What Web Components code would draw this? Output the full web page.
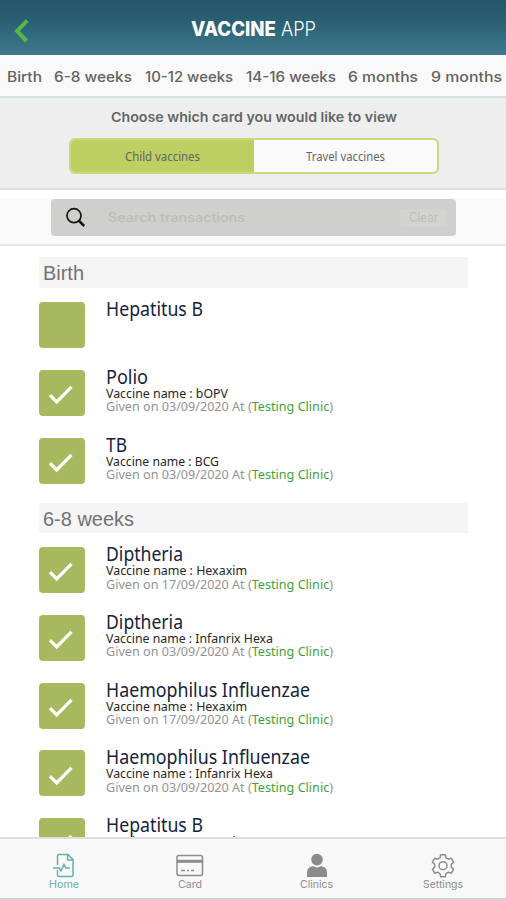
<!DOCTYPE html>
<html lang="en">
<head>
<meta charset="utf-8">
<title>Vaccine App</title>
<style>
html,body{margin:0;height:100%}
body{background:#fff;font-family:"Noto Sans","Open Sans",sans-serif;overflow:hidden}
</style>
</head>
<body>
<vaccine-app></vaccine-app>
<script>
const define = (name, html, setup) => {
  const t = document.createElement('template');
  t.innerHTML = html;
  customElements.define(name, class extends HTMLElement {
    connectedCallback() {
      if (this.shadowRoot) return;
      this.attachShadow({mode: 'open'}).append(t.content.cloneNode(true));
      if (setup) setup(this, this.shadowRoot);
    }
  });
};

/* One line of text condensed or expanded to the width given by its "w" attribute. */
define('fit-text', `<style>
:host{display:block;flex:none;white-space:nowrap}
span{display:inline-block;transform-origin:0 50%}
</style><span><slot></slot></span>`, (el, root) => {
  const w = +el.getAttribute('w'), s = root.querySelector('span');
  el.style.width = w + 'px';
  s.style.transform = 'scaleX(' + w / s.getBoundingClientRect().width + ')';
});

define('app-header', `<style>
:host{display:grid;grid-template-columns:1fr auto 1fr;align-items:center;height:55px;background:linear-gradient(#22566a,#2b6074 40%,#3f798d);color:#fff;box-sizing:border-box;padding:3px 14px 0;font:20px/24px Inter,sans-serif}
svg{display:block;margin-top:4px}
.t{display:flex;gap:5px;padding-left:1px}
.b{font-weight:800}.l{font-weight:300}
</style>
<svg width="16" height="26" viewBox="0 0 16 26"><path d="M13.2 2.6 3 13 12.5 23" fill="none" stroke="#58b548" stroke-width="4"/></svg>
<div class="t"><fit-text class="b" w="85">VACCINE</fit-text><fit-text class="l" w="35">APP</fit-text></div>`);

define('age-tabs', `<style>
:host{display:flex;justify-content:space-between;align-items:center;height:43px;box-sizing:border-box;padding:2px 4px 0 6.5px;background:#f9f9f9;border-bottom:2px solid #d2e0e7;color:#626262;font:500 14px/20px Inter,sans-serif}
</style>
<fit-text w="35">Birth</fit-text><fit-text w="78">6-8 weeks</fit-text><fit-text w="88">10-12 weeks</fit-text><fit-text w="90">14-16 weeks</fit-text><fit-text w="70">6 months</fit-text><fit-text w="71">9 months</fit-text>`);

define('card-chooser', `<style>
:host{display:flex;flex-direction:column;align-items:center;height:92px;box-sizing:border-box;padding-top:9px;background:#eee;border-bottom:2px solid #dedede;color:#626664}
.q{font:600 13.5px/20px Inter,sans-serif;margin-left:1px}
.s{display:grid;grid-template-columns:1fr 1fr;width:370px;height:36px;margin:11px 0 0 2px;box-sizing:border-box;border:2px solid #c9d97b;border-radius:6px;overflow:hidden;background:#fafafa}
.s div{display:flex;align-items:center;justify-content:center;font-size:12px;line-height:16px;padding-top:1px}
.on{background:#bed062}
</style>
<fit-text class="q" w="286">Choose which card you would like to view</fit-text>
<div class="s"><div class="on"><fit-text w="75">Child vaccines</fit-text></div><div><fit-text w="79">Travel vaccines</fit-text></div></div>`);

define('search-bar', `<style>
:host{display:block;height:48px;margin-top:8px;box-sizing:border-box;padding:1px 50px 0 51px;background:#f9f9f9;border-bottom:2px solid #e7e7e7;font:12.5px/18px Inter,sans-serif}
.b{display:flex;align-items:center;height:37px;box-sizing:border-box;padding:0 9px 0 13.5px;border-radius:4px;background:#cfd0cd}
.p{margin-left:22px;color:#bcbdba;font-weight:500}
.c{margin-left:auto;padding:0 9px;background:#d3d4d1;color:#bdbebb;border-radius:2px}
</style>
<div class="b"><svg width="21" height="21" viewBox="0 0 21 21"><circle cx="9" cy="8.7" r="7" fill="none" stroke="#151515" stroke-width="1.7"/><path d="m13.7 13.5 5.5 5.5" stroke="#151515" stroke-width="2.5"/></svg>
<fit-text class="p" w="137">Search transactions</fit-text><div class="c"><fit-text w="29">Clear</fit-text></div></div>`);

define('age-section', `<style>
:host{display:block}
h2{display:flex;align-items:center;height:30.5px;box-sizing:border-box;margin:0 0 var(--gap,14.5px);padding:2px 0 0 4.5px;background:#f5f5f5;color:#727272;font:400 20px/24px "Liberation Sans",sans-serif}
.i{display:flex;flex-direction:column;gap:21.8px}
</style><h2><fit-text></fit-text></h2><div class="i"><slot></slot></div>`, (el, root) => {
  const f = root.querySelector('fit-text');
  f.textContent = el.getAttribute('name');
  const w = +el.getAttribute('w'), s = f.shadowRoot.querySelector('span');
  f.style.width = w + 'px';
  s.style.transform = 'none';
  s.style.transform = 'scaleX(' + w / s.getBoundingClientRect().width + ')';
});

define('vaccine-item', `<style>
:host{display:flex;gap:22px;height:46px}
.k{flex:none;display:grid;place-items:center;width:46px;height:46px;border-radius:4px;background:#a8b85f}
.x{margin-left:-.5px}
svg{display:block;margin-top:5px;margin-right:1px}
:host([pending]) svg{display:none}
</style>
<div class="k"><svg width="26" height="20" viewBox="0 0 26 20"><path d="M2 10.2 8.7 17 23.5 1.8" fill="none" stroke="#fff" stroke-width="3.3"/></svg></div>
<div class="x"><slot></slot></div>`);

define('vaccine-text', `<style>
:host{display:block}
.n{font-size:19.5px;line-height:20px;margin-top:-3px;color:#15233c}
.v,.g{font-size:12px;line-height:13.6px;color:#262626}
.g{color:#939393}
b{font-weight:400;color:#3fa13c}
</style><div id="r"></div>`, (el, root) => {
  const a = n => el.getAttribute(n);
  root.querySelector('#r').innerHTML =
    `<fit-text class="n" w="${a('nw')}">${a('name')}</fit-text>` +
    (a('brand') ? `<fit-text class="v" w="${a('bw')}">Vaccine name : ${a('brand')}</fit-text>` : '') +
    (a('date') ? `<fit-text class="g" w="227">Given on ${a('date')} At (<b>Testing Clinic</b>)</fit-text>` : '');
});

define('tab-item', `<style>
:host{display:flex;flex-direction:column;align-items:center;color:#8c8c8c;font:10.5px/13px Inter,sans-serif}
:host([active]){color:#5fb3a7}
</style><slot name="icon"></slot><slot></slot>`);

define('tab-bar', `<style>
:host{display:grid;grid-template-columns:repeat(4,1fr);height:63px;box-sizing:border-box;padding:14px 0 0 1px;background:#f8f8f8;border-top:2px solid #dedede;border-bottom:2px solid #cfcfcf}
svg{display:block;height:27px;margin-bottom:-2px;fill:none;stroke:currentColor;stroke-width:1.5}
</style>
<tab-item active><svg slot="icon" width="24" height="27" viewBox="0 0 24 27"><path d="M5.5 12V3Q5.5 1.5 7 1.5H16L21 6.5V22Q21 23.5 19.5 23.5H7Q5.5 23.5 5.5 22V17M15.5 1.8V7H20.7M1 15H7L9 17.8 12 11.5 14 15H18"/></svg><fit-text w="30">Home</fit-text></tab-item>
<tab-item><svg slot="icon" width="28" height="27" viewBox="0 0 28 27"><rect x="1" y="2.5" width="25.5" height="20" rx="2"/><path d="M1 8.3H26.5" stroke-width="3"/><path d="M5 17.5H9M11 17.5H13M15 17.5H18"/></svg><fit-text w="24">Card</fit-text></tab-item>
<tab-item><svg slot="icon" width="24" height="27" viewBox="0 0 24 27"><g fill="#8c8c8c" stroke="none"><circle cx="12" cy="6.6" r="5.8"/><path d="M2 24V19.5Q2 15 6 13.7L8 13.1Q12 15.7 16 13.1L18 13.7Q22 15 22 19.5V24Z"/></g></svg><fit-text w="33">Clinics</fit-text></tab-item>
<tab-item><svg slot="icon" width="24" height="27" viewBox="0 0 24 27"><circle cx="12" cy="12.7" r="4"/><path transform="translate(0 -.3)" stroke-linejoin="round" d="M9.7 2H14.3L15 5.1 17.4 6.5 20.3 5.5 22.6 9.5 20.3 11.6V14.4L22.6 16.5 20.3 20.5 17.4 19.5 15 20.9 14.3 24H9.7L9 20.9 6.6 19.5 3.7 20.5 1.4 16.5 3.7 14.4V11.6L1.4 9.5 3.7 5.5 6.6 6.5 9 5.1Z"/></svg><fit-text w="40">Settings</fit-text></tab-item>`);

const item = (name, nw, brand, bw, date) =>
  `<vaccine-item${brand ? '' : ' pending'}><vaccine-text name="${name}" nw="${nw}"${brand ? ` brand="${brand}" bw="${bw}"` : ''}${date ? ` date="${date}"` : ''}></vaccine-text></vaccine-item>`;

define('vaccine-app', `<style>
:host{display:flex;flex-direction:column;width:506px;height:900px;background:#fff;overflow:hidden}
:host>*{flex:none}
main{flex:1 1 0!important;min-height:0;overflow:hidden;box-sizing:border-box;padding:11px 38px 0 38.5px;display:flex;flex-direction:column;gap:19.3px}
main>*{flex:none}
main>:last-child{--gap:13.6px}
</style>
<app-header></app-header><age-tabs></age-tabs><card-chooser></card-chooser><search-bar></search-bar>
<main>
<age-section name="Birth" w="41">
${item('Hepatitus B', 97)}${item('Polio', 42, 'bOPV', 122, '03/09/2020')}${item('TB', 21, 'BCG', 113, '03/09/2020')}
</age-section>
<age-section name="6-8 weeks" w="91">
${item('Diptheria', 77, 'Hexaxim', 141, '17/09/2020')}${item('Diptheria', 77, 'Infanrix Hexa', 167, '03/09/2020')}${item('Haemophilus Influenzae', 204, 'Hexaxim', 141, '17/09/2020')}${item('Haemophilus Influenzae', 204, 'Infanrix Hexa', 167, '03/09/2020')}${item('Hepatitus B', 97, 'Hexaxim', 141)}
</age-section>
</main>
<tab-bar></tab-bar>`);
</script>
</body>
</html>
